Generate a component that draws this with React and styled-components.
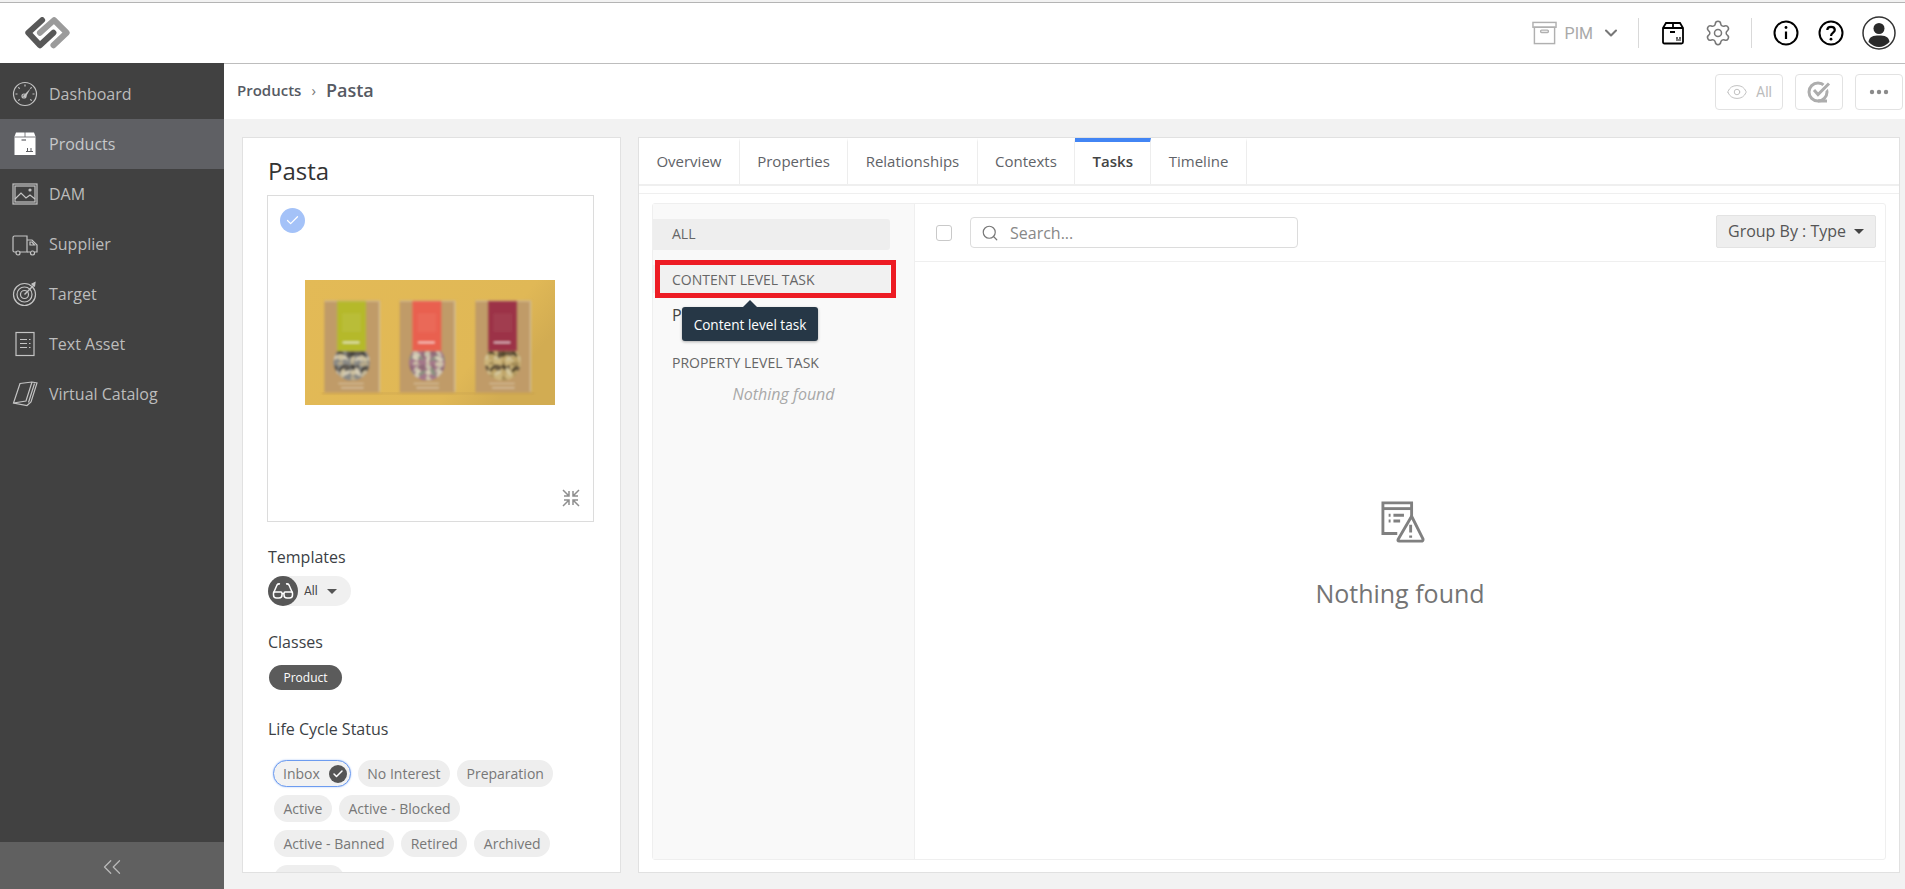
import React from 'react'
import styled, { createGlobalStyle } from 'styled-components'
import { ChevronDown, ChevronsLeft, Eye, Search, Settings, Check } from 'lucide-react'

const GlobalStyle = createGlobalStyle`
  html, body {
    margin: 0;
    padding: 0;
    background: #fff;
  }
  body {
    font-family: "Open Sans", "Liberation Sans", sans-serif;
  }
  * {
    box-sizing: border-box;
  }
`

const Page = styled.div`
  width: 1905px;
  height: 889px;
  padding-top: 2px;
  overflow: hidden;
  display: flex;
  flex-direction: column;
  background: #f2f2f2;
`

const Header = styled.header`
  height: 61px;
  flex: none;
  display: flex;
  align-items: center;
  padding-left: 24px;
  background: #fff;
  border-top: 1px solid #b4b4b4;
`

const HeaderTools = styled.div`
  margin-left: auto;
  display: flex;
  align-items: center;
`

const PimButton = styled.div`
  display: flex;
  align-items: center;
  padding-right: 6px;
  color: #a9a9a9;
  font-family: Roboto, "Liberation Sans", sans-serif;
  font-size: 16px;
  gap: 8px;
`

const PimChevron = styled(ChevronDown)`
  color: #777;
`

const Divider = styled.span`
  width: 1px;
  height: 30px;
  margin: 0 11px;
  background: #d9d9d9;
`

const ToolSlot = styled.div`
  width: ${p => p.$width || 45}px;
  display: flex;
  justify-content: center;
  align-items: center;
  color: ${p => p.$color || '#000'};
`

const Body = styled.div`
  flex: 1;
  min-height: 0;
  display: flex;
`

const Sidebar = styled.aside`
  width: 224px;
  flex: none;
  display: flex;
  flex-direction: column;
  background: #414141;
`

const Nav = styled.nav`
  flex: 1;
  padding-top: 6px;
`

const NavItem = styled.div`
  height: 50px;
  display: flex;
  align-items: center;
  padding-left: 12px;
  gap: 11px;
  font-size: 16px;
  color: ${p => (p.$active ? '#c6c8ca' : '#bcbcbc')};
  background: ${p => (p.$active ? '#5f6064' : 'transparent')};
`

const NavIcon = styled.svg`
  width: 26px;
  height: 26px;
  flex: none;
  fill: none;
  stroke: #c4c4c4;
  stroke-width: 1.2;
`

const Collapse = styled.div`
  height: 47px;
  padding-top: 2px;
  display: flex;
  align-items: center;
  justify-content: center;
  background: #606060;
  color: #b9b9b9;
`

const Main = styled.main`
  flex: 1;
  min-width: 0;
  display: flex;
  flex-direction: column;
  border-top: 1px solid #bdbdbd;
`

const CrumbBar = styled.div`
  height: 55px;
  flex: none;
  display: flex;
  align-items: center;
  padding: 0 2px 0 13px;
  background: #fff;
`

const CrumbTrail = styled.div`
  display: flex;
  align-items: center;
  margin-top: -3px;
`

const CrumbLink = styled.span`
  font-size: 15px;
  font-weight: 600;
  color: #565a63;
`

const CrumbArrow = styled.span`
  margin: 0 10px;
  font-size: 15px;
  color: #777;
`

const CrumbCurrent = styled.span`
  font-size: 18px;
  font-weight: 600;
  color: #565a63;
`

const Actions = styled.div`
  margin-left: auto;
  display: flex;
  gap: 12px;
`

const ActionButton = styled.div`
  width: ${p => p.$width}px;
  height: 36px;
  display: flex;
  align-items: center;
  justify-content: center;
  gap: 8px;
  border: 1px solid #e2e2e2;
  border-radius: 4px;
  color: #bcbcbc;
  font-family: Roboto, "Liberation Sans", sans-serif;
  font-size: 14px;
  background: #fff;
`

const Content = styled.div`
  flex: 1;
  min-height: 0;
  display: flex;
  gap: 17px;
  padding: 18px 5px 16px 18px;
`

const InfoCard = styled.section`
  width: 379px;
  flex: none;
  overflow: hidden;
  padding: 0 26px 0 24px;
  background: #fff;
  border: 1px solid #e1e1e1;
`

const CardTitle = styled.h1`
  margin: 0;
  height: 57px;
  padding: 17px 0 0 1px;
  font-size: 24px;
  line-height: 32px;
  font-weight: 400;
  color: #333;
`

const PreviewBox = styled.div`
  position: relative;
  height: 327px;
  display: flex;
  align-items: center;
  justify-content: center;
  border: 1px solid #dcdcdc;
`

const PreviewImage = styled.svg`
  width: 250px;
  height: 125px;
  margin: 0 2px 32px 0;
`

const SelectedMark = styled.span`
  position: absolute;
  left: 12px;
  top: 12px;
  width: 25px;
  height: 25px;
  border-radius: 50%;
  display: flex;
  align-items: center;
  justify-content: center;
  background: #a4c2f8;
  color: #fff;
`

const CompressIcon = styled.svg`
  position: absolute;
  right: 13px;
  bottom: 14px;
  width: 18px;
  height: 18px;
  fill: none;
  stroke: #8f8f8f;
  stroke-width: 1.5;
`

const FieldLabel = styled.div`
  margin: ${p => p.$top}px 0 0 1px;
  font-size: 16px;
  line-height: 22px;
  color: #3c3f45;
`

const TemplateChip = styled.div`
  width: 83px;
  height: 30px;
  margin: 8px 0 0 1px;
  display: flex;
  align-items: center;
  border-radius: 15px;
  background: #f0f0f0;
  font-family: Roboto, "Liberation Sans", sans-serif;
  font-size: 12px;
  color: #444;
`

const TemplateIcon = styled.span`
  width: 30px;
  height: 30px;
  margin-right: 6px;
  border-radius: 50%;
  display: flex;
  align-items: center;
  justify-content: center;
  background: #575757;
`

const Caret = styled.span`
  width: 0;
  height: 0;
  margin-left: ${p => p.$left || 0}px;
  border-left: 5px solid transparent;
  border-right: 5px solid transparent;
  border-top: 5px solid ${p => p.$color || '#555'};
`

const ClassChip = styled.div`
  width: 73px;
  height: 25px;
  margin: 12px 0 0 2px;
  display: flex;
  align-items: center;
  justify-content: center;
  border-radius: 13px;
  background: #5b5b5b;
  color: #fff;
  font-size: 12px;
`

const StatusList = styled.div`
  width: 300px;
  margin: 20px 0 0 7px;
  display: flex;
  flex-wrap: wrap;
  gap: 8px 7px;
`

const StatusChip = styled.div`
  height: 27px;
  display: flex;
  align-items: center;
  gap: 9px;
  padding: 0 ${p => (p.$selected ? 3 : 9.5)}px 0 ${p => (p.$selected ? 9 : 9.5)}px;
  border-radius: 14px;
  font-size: 14px;
  color: #777;
  background: #eee;
  ${p => p.$selected && `
    margin-left: -1px;
    border: 1.5px solid #6d9cf0;
    box-shadow: 0 0 2px #a4c2f8;
    background: #f2f2f2;
  `}
`

// the last chip is cut by the card's edge before its label shows
const ClippedChip = styled.div`
  width: 70px;
  height: 27px;
  border-radius: 14px;
  background: #eee;
`

const SelectedDot = styled.span`
  width: 18px;
  height: 18px;
  border-radius: 50%;
  display: flex;
  align-items: center;
  justify-content: center;
  background: #555;
  color: #fff;
`

const TaskPanel = styled.section`
  flex: 1;
  min-width: 0;
  display: flex;
  flex-direction: column;
  background: #fff;
  border: 1px solid #e1e1e1;
`

const TabBar = styled.div`
  height: 48px;
  flex: none;
  display: flex;
  border-bottom: 2px solid #efefef;
`

const Tab = styled.div`
  display: flex;
  align-items: center;
  padding: 0 17.4px 5px;
  font-size: 15px;
  font-weight: ${p => (p.$active ? 600 : 400)};
  color: ${p => (p.$active ? '#444' : '#5f6368')};
  border-right: 1.5px solid #ededed;
  border-top: 4px solid ${p => (p.$active ? '#4285f4' : 'transparent')};
`

const TaskBody = styled.div`
  flex: 1;
  min-height: 0;
  margin-top: 7px;
  padding: 9px 13px 12px;
  border-top: 1px solid #efefef;
`

const TaskFrame = styled.div`
  height: 100%;
  display: flex;
  border: 1px solid #efefef;
  border-radius: 3px;
`

const GroupColumn = styled.div`
  width: 262px;
  flex: none;
  padding-top: 15px;
  background: #f9f9f9;
  border-right: 1px solid #efefef;
`

const AllRow = styled.div`
  width: 237px;
  height: 31px;
  display: flex;
  align-items: center;
  padding: 0 0 2px 19px;
  border-radius: 0 3px 3px 0;
  background: #eee;
  font-size: 14px;
  color: #666;
`

const ContentRow = styled.div`
  position: relative;
  width: 237px;
  height: 28px;
  margin-top: 15px;
  display: flex;
  align-items: center;
  padding-left: 19px;
  background: #f1f1f1;
  font-size: 14px;
  color: #666;
`

const RedMark = styled.span`
  position: absolute;
  left: 2px;
  right: -6px;
  top: -5px;
  bottom: -5px;
  border: 5px solid #ed1c24;
`

const Tooltip = styled.div`
  position: absolute;
  left: 29px;
  top: 42px;
  width: 136px;
  height: 34px;
  display: flex;
  align-items: center;
  justify-content: center;
  border-radius: 3px;
  background: #263746;
  color: #fff;
  font-size: 13.6px;
  box-shadow: 0 1px 3px rgba(0, 0, 0, 0.3);
  &::before {
    content: '';
    position: absolute;
    left: 61px;
    top: -7px;
    border-left: 7px solid transparent;
    border-right: 7px solid transparent;
    border-bottom: 7px solid #263746;
  }
`

const CutOffLabel = styled.div`
  margin: 11px 0 0 19px;
  height: 22px;
  font-size: 16px;
  line-height: 22px;
  color: #444;
`

const GroupLabel = styled.div`
  margin: 27px 0 0 19px;
  font-size: 14px;
  line-height: 20px;
  color: #666;
`

const GroupEmpty = styled.div`
  margin-top: 11px;
  text-align: center;
  font-size: 16px;
  line-height: 20px;
  font-style: italic;
  color: #a8a8a8;
`

const ListColumn = styled.div`
  flex: 1;
  min-width: 0;
  display: flex;
  flex-direction: column;
`

const ListToolbar = styled.div`
  height: 58px;
  flex: none;
  display: flex;
  align-items: center;
  padding: 0 9px 0 21px;
  border-bottom: 1px solid #efefef;
`

const Checkbox = styled.span`
  width: 16px;
  height: 16px;
  border: 1px solid #c9c9c9;
  border-radius: 3px;
  background: #fff;
`

const SearchBox = styled.div`
  width: 328px;
  height: 31px;
  margin-left: 18px;
  display: flex;
  align-items: center;
  gap: 11px;
  padding-left: 10px;
  border: 1px solid #dcdcdc;
  border-radius: 4px;
  font-size: 16px;
  color: #888;
`

const SearchGlyph = styled(Search)`
  color: #777;
`

const GroupByButton = styled.div`
  width: 160px;
  height: 33px;
  margin: -3px 0 0 auto;
  display: flex;
  align-items: center;
  padding-left: 11px;
  border: 1px solid #e3e3e3;
  border-radius: 2px;
  background: #eee;
  font-size: 16px;
  color: #555;
`

const EmptyState = styled.div`
  flex: 1;
  display: flex;
  flex-direction: column;
  align-items: center;
  justify-content: center;
  padding-bottom: 12px;
  color: #747474;
`

const EmptyIcon = styled.svg`
  width: 44px;
  height: 44px;
  margin-left: 6px;
  fill: none;
  stroke: #808080;
  stroke-width: 3;
`

const EmptyText = styled.div`
  margin-top: 32px;
  font-size: 25px;
  line-height: 34px;
  font-weight: 400;
`

const Logo = () => (
  <svg width="46" height="33" viewBox="25 25 145 105" fill="none" strokeWidth="19" strokeLinecap="round" strokeLinejoin="round">
    <path d="M118 115 L160 75 L120 35 L75 75" stroke="#9b9b9b" />
    <path d="M82 35 L38 75 L75 115 L118 75" stroke="#585858" />
  </svg>
)

const ArchiveIcon = () => (
  <svg width="25" height="24" viewBox="0 0 26 24" fill="none" stroke="#b0b0b0" strokeWidth="1.5">
    <rect x="1" y="1" width="24" height="5" />
    <rect x="2.5" y="6" width="21" height="17" />
    <rect x="9" y="9" width="8" height="2.4" rx="1" />
  </svg>
)

const BoxIcon = () => (
  <svg width="24" height="24" viewBox="0 0 24 24" fill="none" stroke="#000" strokeWidth="1.8">
    <path d="M2 7 L5 2 H19 L22 7 V21 Q22 22.5 20.5 22.5 H3.5 Q2 22.5 2 21 Z" />
    <path d="M2 7 H22 M12 2 V7 M9 11 H14" />
    <path d="M15 19 H20 M16 16 V18 M19 16 V18" strokeWidth="1.2" />
  </svg>
)

const InfoIcon = () => (
  <svg width="26" height="26" viewBox="0 0 26 26" fill="none" stroke="#000" strokeWidth="2">
    <circle cx="13" cy="13" r="11.5" />
    <path d="M13 11.5 V19" strokeWidth="2.2" />
    <circle cx="13" cy="7.5" r="1.4" fill="#000" stroke="none" />
  </svg>
)

const HelpIcon = () => (
  <svg width="26" height="26" viewBox="0 0 26 26" fill="none" stroke="#000" strokeWidth="2">
    <circle cx="13" cy="13" r="11.5" />
    <path d="M9.3 10 C9.3 5.8 16.8 5.8 16.8 10 C16.8 12.8 13 12.5 13 16" strokeWidth="2.2" />
    <circle cx="13" cy="19.2" r="1.4" fill="#000" stroke="none" />
  </svg>
)

const AvatarIcon = () => (
  <svg width="34" height="34" viewBox="0 0 34 34" fill="none">
    <circle cx="17" cy="17" r="16" stroke="#333" strokeWidth="1.5" />
    <circle cx="17" cy="12.5" r="5.5" fill="#2a2a2a" />
    <path d="M6.5 26 C7 20.5 11.5 19.5 17 19.5 C22.5 19.5 27 20.5 27.5 26 Q22.5 31 17 31 Q11.5 31 6.5 26 Z" fill="#2a2a2a" />
  </svg>
)

const TaskCheckIcon = () => (
  <svg width="24" height="24" viewBox="0 0 24 24" fill="none" stroke="#adadad" strokeWidth="3">
    <circle cx="11" cy="12" r="9" />
    <path d="M11 21 H20" />
    <path d="M7 10 L11 14.5 L22.5 3" stroke="#fff" strokeWidth="6" />
    <path d="M7 10 L11 14.5 L22 3.5" />
  </svg>
)

const DotsIcon = () => (
  <svg width="20" height="6" viewBox="0 0 20 6" fill="#8b8b8b">
    <circle cx="3" cy="3" r="2.2" />
    <circle cx="10" cy="3" r="2.2" />
    <circle cx="17" cy="3" r="2.2" />
  </svg>
)

const GlassesIcon = () => (
  <svg width="22" height="18" viewBox="0 0 22 18" fill="none" stroke="#fff" strokeWidth="1.5">
    <path d="M1.5 11 L5 3 Q6 1.5 8 2 M20.5 11 L17 3 Q16 1.5 14 2" />
    <path d="M2 10 H9 Q10 10 10 11.5 V13 Q10 16 7 16 H4.5 Q1.5 16 1.5 13 V11 Q1.5 10 2 10 Z" />
    <path d="M13 10 H20 Q20.5 10 20.5 11 V13 Q20.5 16 17.5 16 H15 Q12 16 12 13 V11.5 Q12 10 13 10 Z" />
    <path d="M10 12 Q11 11 12 12" />
  </svg>
)

const DashboardGlyph = () => (
  <NavIcon viewBox="0 0 26 26">
    <circle cx="13" cy="13" r="11.5" />
    <path d="M13 3.5 V5.5 M3.5 13 H5.5 M22.5 13 H20.5 M6.3 6.3 L7.7 7.7 M19.7 6.3 L18.3 7.7 M6.3 19.7 L7.7 18.3 M19.7 19.7 L18.3 18.3" />
    <path d="M10.5 15.5 L18.5 7.5 L13.5 16.5 Z" fill="#c4c4c4" stroke="none" />
    <circle cx="12" cy="15" r="2" />
  </NavIcon>
)

const ProductsGlyph = () => (
  <NavIcon viewBox="0 0 26 26">
    <path d="M4 1.5 H22 L23.5 5.5 V24 H2.5 V5.5 Z" fill="#fff" stroke="none" />
    <path d="M2.5 6 H23.5 M13 1 V6" stroke="#5f6064" strokeWidth="0.8" />
    <path d="M9.5 9 H14" stroke="#5f6064" strokeWidth="1.2" />
    <path d="M14 20.5 H21 M15.5 17 V20 M19 17 V20" stroke="#5f6064" strokeWidth="1" />
  </NavIcon>
)

const DamGlyph = () => (
  <NavIcon viewBox="0 0 26 26">
    <rect x="1" y="3" width="24" height="20" />
    <rect x="3" y="5" width="20" height="16" />
    <path d="M3 18 L9 12 L14 17 L18 14 L23 18" />
    <circle cx="18" cy="9" r="1" fill="#c4c4c4" />
  </NavIcon>
)

const SupplierGlyph = () => (
  <NavIcon viewBox="0 0 26 26">
    <path d="M4 21 H2.5 Q1 21 1 19.5 V6.5 Q1 5 2.5 5 H15 V21 H8" />
    <path d="M15 9 H20 L25 14 V21 H22.5 M15 21 H18" />
    <path d="M18 11 H20 L22.5 14 H18 Z" />
    <circle cx="6" cy="22" r="2" />
    <circle cx="20.5" cy="22" r="2" />
  </NavIcon>
)

const TargetGlyph = () => (
  <NavIcon viewBox="0 0 26 26">
    <circle cx="12.5" cy="13.5" r="11" />
    <circle cx="12.5" cy="13.5" r="7.5" />
    <circle cx="12.5" cy="13.5" r="4" />
    <path d="M12.5 13.5 L22 4" strokeWidth="1.4" />
    <path d="M20 3 L23 1.5 L22.5 5 Z" fill="#c4c4c4" />
  </NavIcon>
)

const TextAssetGlyph = () => (
  <NavIcon viewBox="0 0 26 26">
    <rect x="4" y="1.5" width="18" height="23" />
    <path d="M8 8.5 H15 M17 8.5 H18.5 M8 12.5 H15 M17 12.5 H18.5 M8 16.5 H15 M17 16.5 H18.5" />
  </NavIcon>
)

const CatalogGlyph = () => (
  <NavIcon viewBox="0 0 26 26">
    <path d="M8 2.5 L20 1 L25 2 L19 21 L15 24.5 L1.5 22 Z" />
    <path d="M20 1 L14 20 L1.5 22" />
    <path d="M22.5 2.5 L16.5 21.5" />
  </NavIcon>
)

const PastaBox = ({ id, x, band, palette }) => {
  // a loose grid of pasta pieces behind the box window
  const pieces = Array.from({ length: 42 }, (_, i) => {
    const col = i % 7
    const row = Math.floor(i / 7)
    return {
      cx: x + 30 + col * 17 + (i * 13) % 9,
      cy: 232 + row * 15 + (i * 7) % 8,
      rx: 9 + (i * 5) % 7,
      ry: 5 + (i * 3) % 5,
      angle: i * 47,
      fill: palette[(i * 3 + row) % palette.length]
    }
  })
  return (
    <g>
      <rect x={x} y="78" width="166" height="275" fill="#c09b68" />
      <rect x={x} y="76" width="168" height="4" fill="#d2b98c" />
      <rect x={x + 38} y="78" width="87" height="150" fill={band} />
      <rect x={x + 54} y="115" width="56" height="56" fill="#fff" opacity="0.06" />
      <rect x={x + 164} y="80" width="3" height="270" fill="#d8cbb0" />
      <clipPath id={id}>
        <path d={`M${x + 40} 228 H${x + 124} A54 54 0 1 1 ${x + 40} 228 Z`} />
      </clipPath>
      <g clipPath={`url(#${id})`}>
        <rect x={x + 20} y="228" width="125" height="92" fill={palette[2]} />
        {pieces.map((piece, i) => (
          <ellipse
            key={i}
            cx={piece.cx}
            cy={piece.cy}
            rx={piece.rx}
            ry={piece.ry}
            fill={piece.fill}
            transform={`rotate(${piece.angle} ${piece.cx} ${piece.cy})`}
          />
        ))}
      </g>
      <rect x={x + 55} y="200" width="50" height="5" fill="#fff" opacity="0.75" />
      <rect x={x + 42} y="324" width="76" height="3" fill="#eadfca" opacity="0.7" />
      <rect x={x + 50} y="337" width="68" height="3" fill="#eadfca" opacity="0.8" />
    </g>
  )
}

const PastaPicture = () => (
  <PreviewImage viewBox="15 15 750 375" preserveAspectRatio="none">
    <defs>
      <linearGradient id="wall" x1="0" y1="0" x2="1" y2="0.4">
        <stop offset="0" stopColor="#e3ba56" />
        <stop offset="0.8" stopColor="#e0b856" />
        <stop offset="1" stopColor="#d2ac52" />
      </linearGradient>
      <filter id="soft">
        <feGaussianBlur stdDeviation="2.4" />
      </filter>
    </defs>
    <rect x="15" y="15" width="750" height="375" fill="url(#wall)" />
    <rect x="65" y="352" width="640" height="6" fill="#c9a24f" opacity="0.6" filter="url(#soft)" />
    <g filter="url(#soft)">
      <PastaBox id="pack-a" x={73} band="#b5b92c" palette={['#5e5a52', '#cfc2a0', '#8a8a86', '#4a4640', '#d6cdb6', '#b8ab8c']} />
      <PastaBox id="pack-b" x={299} band="#e9604f" palette={['#8f6a78', '#d8cfb8', '#a4788a', '#c9c2ae', '#8a9280', '#d0c5ac']} />
      <PastaBox id="pack-c" x={526} band="#9c3146" palette={['#6a5a40', '#bfa568', '#cdb67c', '#57492f', '#d4c79c', '#a58d57']} />
    </g>
  </PreviewImage>
)

const NAV_ITEMS = [
  { label: 'Dashboard', Glyph: DashboardGlyph },
  { label: 'Products', Glyph: ProductsGlyph, active: true },
  { label: 'DAM', Glyph: DamGlyph },
  { label: 'Supplier', Glyph: SupplierGlyph },
  { label: 'Target', Glyph: TargetGlyph },
  { label: 'Text Asset', Glyph: TextAssetGlyph },
  { label: 'Virtual Catalog', Glyph: CatalogGlyph }
]

const STATUSES = ['No Interest', 'Preparation', 'Active', 'Active - Blocked', 'Active - Banned', 'Retired', 'Archived']

const TABS = ['Overview', 'Properties', 'Relationships', 'Contexts', 'Tasks', 'Timeline']

export default function App () {
  return (
    <Page>
      <GlobalStyle />
      <Header>
        <Logo />
        <HeaderTools>
          <PimButton>
            <ArchiveIcon />
            PIM
            <PimChevron size={20} strokeWidth={2.5} />
          </PimButton>
          <Divider />
          <ToolSlot><BoxIcon /></ToolSlot>
          <ToolSlot $color="#777"><Settings size={28} strokeWidth={1.3} /></ToolSlot>
          <Divider />
          <ToolSlot><InfoIcon /></ToolSlot>
          <ToolSlot><HelpIcon /></ToolSlot>
          <ToolSlot $width={52}><AvatarIcon /></ToolSlot>
        </HeaderTools>
      </Header>
      <Body>
        <Sidebar>
          <Nav>
            {NAV_ITEMS.map(({ label, Glyph, active }) => (
              <NavItem key={label} $active={active}>
                <Glyph />
                {label}
              </NavItem>
            ))}
          </Nav>
          <Collapse><ChevronsLeft size={30} strokeWidth={1} /></Collapse>
        </Sidebar>
        <Main>
          <CrumbBar>
            <CrumbTrail>
              <CrumbLink>Products</CrumbLink>
              <CrumbArrow>›</CrumbArrow>
              <CrumbCurrent>Pasta</CrumbCurrent>
            </CrumbTrail>
            <Actions>
              <ActionButton $width={68}><Eye size={22} strokeWidth={1} />All</ActionButton>
              <ActionButton $width={48}><TaskCheckIcon /></ActionButton>
              <ActionButton $width={48}><DotsIcon /></ActionButton>
            </Actions>
          </CrumbBar>
          <Content>
            <InfoCard>
              <CardTitle>Pasta</CardTitle>
              <PreviewBox>
                <SelectedMark><Check size={15} strokeWidth={2} /></SelectedMark>
                <PastaPicture />
                <CompressIcon viewBox="0 0 18 18">
                  <path d="M1 1 L7 7 M7 2 V7 H2 M17 1 L11 7 M11 2 V7 H16 M1 17 L7 11 M7 16 V11 H2 M17 17 L11 11 M11 16 V11 H16" />
                </CompressIcon>
              </PreviewBox>
              <FieldLabel $top={24}>Templates</FieldLabel>
              <TemplateChip>
                <TemplateIcon><GlassesIcon /></TemplateIcon>
                All
                <Caret $left={9} />
              </TemplateChip>
              <FieldLabel $top={25}>Classes</FieldLabel>
              <ClassChip>Product</ClassChip>
              <FieldLabel $top={28}>Life Cycle Status</FieldLabel>
              <StatusList>
                <StatusChip $selected>
                  Inbox
                  <SelectedDot><Check size={12} strokeWidth={3} /></SelectedDot>
                </StatusChip>
                {STATUSES.map(status => <StatusChip key={status}>{status}</StatusChip>)}
                <ClippedChip />
              </StatusList>
            </InfoCard>
            <TaskPanel>
              <TabBar>
                {TABS.map(tab => <Tab key={tab} $active={tab === 'Tasks'}>{tab}</Tab>)}
              </TabBar>
              <TaskBody>
                <TaskFrame>
                  <GroupColumn>
                    <AllRow>ALL</AllRow>
                    <ContentRow>
                      CONTENT LEVEL TASK
                      <RedMark />
                      <Tooltip>Content level task</Tooltip>
                    </ContentRow>
                    <CutOffLabel>P</CutOffLabel>
                    <GroupLabel>PROPERTY LEVEL TASK</GroupLabel>
                    <GroupEmpty>Nothing found</GroupEmpty>
                  </GroupColumn>
                  <ListColumn>
                    <ListToolbar>
                      <Checkbox />
                      <SearchBox>
                        <SearchGlyph size={18} strokeWidth={1.6} />
                        Search...
                      </SearchBox>
                      <GroupByButton>
                        Group By : Type
                        <Caret $left={8} $color="#444" />
                      </GroupByButton>
                    </ListToolbar>
                    <EmptyState>
                      <EmptyIcon viewBox="0 0 46 44">
                        <path d="M17 34 H2 V2 H32 V16" />
                        <path d="M2 8 H32" />
                        <path d="M8 15 H10 M13 15 H24 M8 21 H10 M13 21 H20" />
                        <path d="M32 16 L44 40 Q44 42 42 42 H19 Q17 42 18 40 Z" strokeLinejoin="round" />
                        <path d="M31 25 V33 M31 36 V38.5" />
                      </EmptyIcon>
                      <EmptyText>Nothing found</EmptyText>
                    </EmptyState>
                  </ListColumn>
                </TaskFrame>
              </TaskBody>
            </TaskPanel>
          </Content>
        </Main>
      </Body>
    </Page>
  )
}
